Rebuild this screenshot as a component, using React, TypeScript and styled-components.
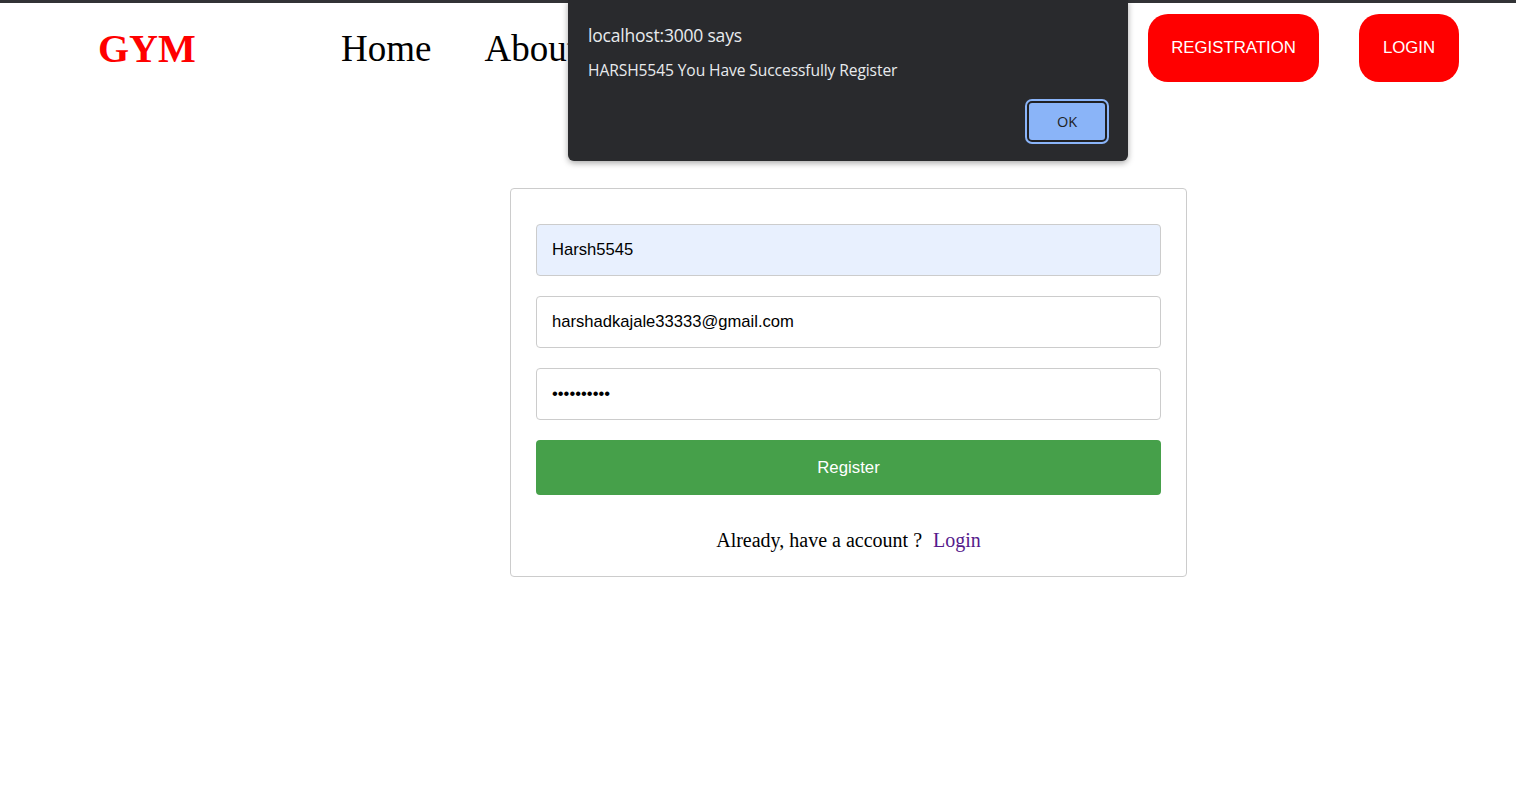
import React from "react";
import styled, { createGlobalStyle } from "styled-components";

const Global = createGlobalStyle`
  html, body { margin: 0; padding: 0; background: #fff; }
  body { font-family: "Liberation Serif", "Times New Roman", serif; }
  * { box-sizing: border-box; }
`;

const Page = styled.div`
  position: relative;
  width: 1516px;
  min-height: 811px;
  border-top: 3px solid #323336;
`;

const Nav = styled.nav`
  display: flex;
  align-items: center;
  height: 88px;
  padding: 2px 57px 0 98px;
`;

const Logo = styled.div`
  font-family: "Liberation Serif", serif;
  font-weight: 700;
  font-size: 40px;
  color: #ff0000;
  width: 243px;
`;

const NavLinks = styled.div`
  display: flex;
  gap: 53px;
  flex: 1;
`;

const NavLink = styled.span`
  font-family: "Liberation Serif", serif;
  font-size: 37px;
  color: #000;
`;

const NavButtons = styled.div`
  display: flex;
  gap: 40px;
`;

const RedButton = styled.button<{ $w: number }>`
  width: ${(p) => p.$w}px;
  height: 68px;
  border: none;
  border-radius: 20px;
  background: #ff0000;
  color: #fff;
  font-family: "Liberation Sans", Arial, sans-serif;
  font-size: 16.8px;
`;

const Card = styled.form`
  margin: 97px 0 0 510px;
  width: 677px;
  border: 1px solid #cccccc;
  border-radius: 4px;
  padding: 35px 25px 24px;
  display: flex;
  flex-direction: column;
  gap: 20px;
`;

const Input = styled.input<{ $filled?: boolean }>`
  width: 625px;
  height: 52px;
  border: 1px solid #cccccc;
  border-radius: 4px;
  padding: 0 15px;
  font-family: "Liberation Sans", Arial, sans-serif;
  font-size: 16.6px;
  color: #000;
  background: ${(p) => (p.$filled ? "#e8f0fe" : "#fff")};
  outline: none;
`;

const Submit = styled.button`
  width: 625px;
  height: 55px;
  border: none;
  border-radius: 4px;
  background: #46a04a;
  color: #fff;
  font-family: "Liberation Sans", Arial, sans-serif;
  font-size: 16.8px;
`;

const Footer = styled.p`
  margin: 13px 0 0;
  text-align: center;
  font-family: "Liberation Serif", serif;
  font-size: 20px;
  line-height: 24px;
  color: #000;
`;

const FootLink = styled.a`
  color: #551a8b;
  text-decoration: none;
  margin-left: 6px;
`;

const Dialog = styled.div`
  position: absolute;
  top: -3px;
  left: 568px;
  width: 560px;
  height: 161px;
  background: #292a2d;
  border-radius: 0 0 6px 6px;
  box-shadow: 0 2px 6px rgba(0, 0, 0, 0.35);
  padding: 23px 20px 0 20px;
  display: flex;
  flex-direction: column;
  font-family: "Open Sans", "Noto Sans", sans-serif;
  color: #e8eaed;
`;

const DialogTitle = styled.div`
  font-size: 17.5px;
  line-height: 24px;
  letter-spacing: -0.2px;
`;

const DialogMessage = styled.div`
  margin-top: 13px;
  font-size: 15.6px;
  line-height: 20px;
  letter-spacing: -0.1px;
`;

const DialogActions = styled.div`
  display: flex;
  justify-content: flex-end;
  margin-top: 21px;
`;

const OkButton = styled.button`
  width: 80px;
  height: 41px;
  background: #8ab4f8;
  border: 2px solid #202124;
  border-radius: 5px;
  box-shadow: 0 0 0 2px #8ab4f8;
  color: #202124;
  font-family: "Open Sans", "Noto Sans", sans-serif;
  font-size: 14.5px;
  margin-right: 1px;
`;

export default function App() {
  return (
    <Page>
      <Global />
      <Nav>
        <Logo>GYM</Logo>
        <NavLinks>
          <NavLink>Home</NavLink>
          <NavLink>About</NavLink>
          <NavLink>Services</NavLink>
        </NavLinks>
        <NavButtons>
          <RedButton $w={171}>REGISTRATION</RedButton>
          <RedButton $w={100}>LOGIN</RedButton>
        </NavButtons>
      </Nav>
      <Card onSubmit={(e) => e.preventDefault()}>
        <Input $filled defaultValue="Harsh5545" />
        <Input defaultValue="harshadkajale33333@gmail.com" />
        <Input type="password" defaultValue="harsh12345" />
        <Submit type="submit">Register</Submit>
        <Footer>
          Already, have a account ? <FootLink href="#">Login</FootLink>
        </Footer>
      </Card>
      <Dialog role="alertdialog">
        <DialogTitle>localhost:3000 says</DialogTitle>
        <DialogMessage>HARSH5545 You Have Successfully Register</DialogMessage>
        <DialogActions>
          <OkButton>OK</OkButton>
        </DialogActions>
      </Dialog>
    </Page>
  );
}
